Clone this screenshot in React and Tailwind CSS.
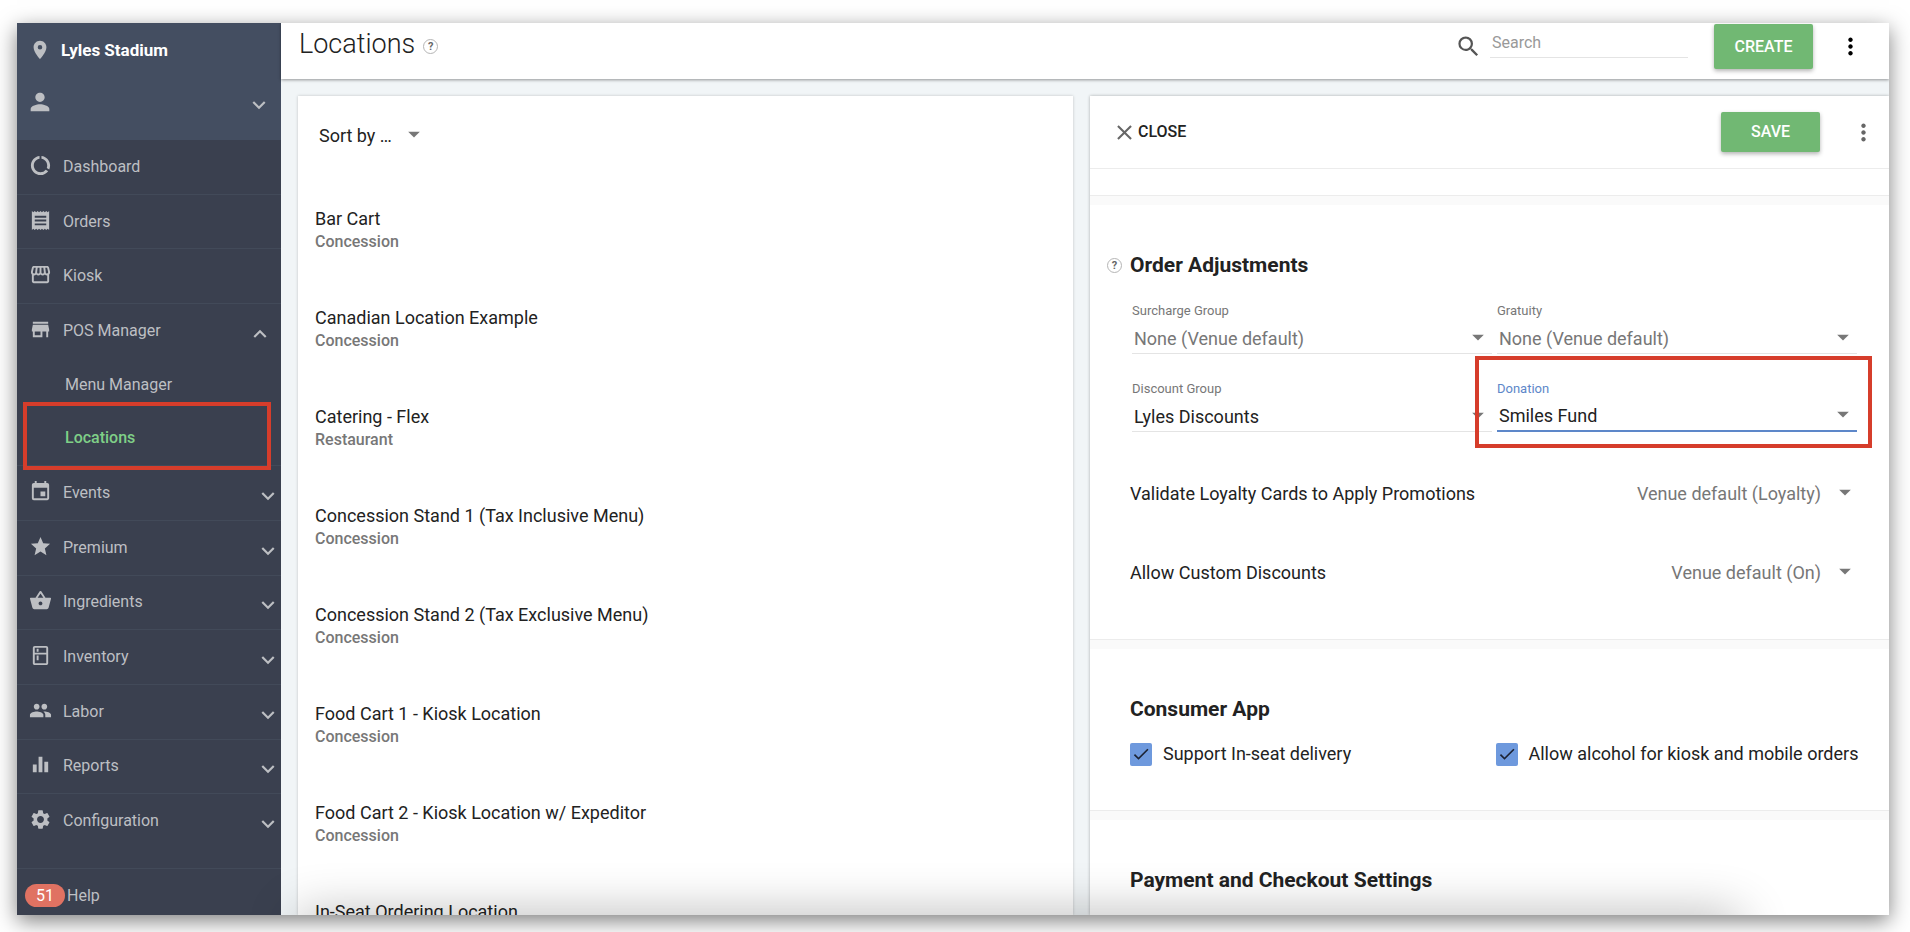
import React from 'react';
import {
  MdPlace,
  MdPerson,
  MdDataUsage,
  MdReceipt,
  MdStorefront,
  MdStore,
  MdEvent,
  MdStar,
  MdShoppingBasket,
  MdOutlineKitchen,
  MdPeople,
  MdEqualizer,
  MdSettings,
  MdExpandMore,
  MdExpandLess,
  MdSearch,
  MdMoreVert,
  MdArrowDropDown,
  MdClose,
  MdCheck
} from 'react-icons/md';

const navItems = [
  { label: 'Dashboard', icon: MdDataUsage },
  { label: 'Orders', icon: MdReceipt },
  { label: 'Kiosk', icon: MdStorefront },
  { label: 'POS Manager', icon: MdStore, open: true, children: ['Menu Manager', 'Locations'] },
  { label: 'Events', icon: MdEvent, collapsed: true },
  { label: 'Premium', icon: MdStar, collapsed: true },
  { label: 'Ingredients', icon: MdShoppingBasket, collapsed: true },
  { label: 'Inventory', icon: MdOutlineKitchen, collapsed: true },
  { label: 'Labor', icon: MdPeople, collapsed: true },
  { label: 'Reports', icon: MdEqualizer, collapsed: true },
  { label: 'Configuration', icon: MdSettings, collapsed: true }
];

const locations = [
  { name: 'Bar Cart', type: 'Concession' },
  { name: 'Canadian Location Example', type: 'Concession' },
  { name: 'Catering - Flex', type: 'Restaurant' },
  { name: 'Concession Stand 1 (Tax Inclusive Menu)', type: 'Concession' },
  { name: 'Concession Stand 2 (Tax Exclusive Menu)', type: 'Concession' },
  { name: 'Food Cart 1 - Kiosk Location', type: 'Concession' },
  { name: 'Food Cart 2 - Kiosk Location w/ Expeditor', type: 'Concession' },
  { name: 'In-Seat Ordering Location', type: 'Concession' }
];

function HelpDot() {
  return (
    <button
      type="button"
      aria-label="Help"
      className="flex h-[15px] w-[15px] shrink-0 items-center justify-center rounded-full border border-[#b5b5b5] text-[11px] leading-none font-bold text-[#666]"
    >
      ?
    </button>
  );
}

function NavRow({ item }) {
  const Icon = item.icon;
  return (
    <a href="#" className="flex flex-1 items-center border-b border-[#424a59] pl-3 last:border-b-0">
      <Icon className="mr-[11px] mb-[3px] h-[23px] w-[23px] shrink-0" />
      <span className="flex-1">{item.label}</span>
      {item.collapsed && <MdExpandMore className="mt-[6px] h-[26px] w-[26px]" />}
    </a>
  );
}

function Sidebar() {
  return (
    <aside className="flex w-[264px] shrink-0 flex-col bg-[#3a404f] text-base text-[#bdbfc3]">
      <div className="h-[117px] shrink-0 bg-[#444e61] pt-[15px]">
        <div className="flex items-center pl-3">
          <MdPlace className="mr-[10px] h-[22px] w-[22px]" />
          <span className="text-[17px] leading-6 font-bold text-white">Lyles Stadium</span>
        </div>
        <button type="button" aria-label="Account" className="mt-6 flex w-full items-center justify-between pr-[9px] pl-[9px]">
          <MdPerson className="h-7 w-7" />
          <MdExpandMore className="mt-[6px] h-[26px] w-[26px]" />
        </button>
      </div>

      <nav className="flex flex-1 flex-col pb-5">
        {navItems.map((item) =>
          item.children ? (
            <div key={item.label} className="flex flex-[3] flex-col border-b border-[#424a59]">
              <a href="#" className="flex flex-1 items-center pr-2 pl-3">
                <item.icon className="mr-[11px] mb-[3px] h-[23px] w-[23px] shrink-0" />
                <span className="flex-1">{item.label}</span>
                <MdExpandLess className="mt-[6px] h-[26px] w-[26px]" />
              </a>
              <a href="#" className="flex flex-1 items-center pl-12">Menu Manager</a>
              <a href="#" className="relative flex flex-1 items-center pl-12 font-medium text-[#7fcf87]">
                Locations
                {/* callout */}
                <span className="pointer-events-none absolute -top-[9px] right-[10px] -bottom-[5px] left-[6px] border-4 border-[#d63d2b]"></span>
              </a>
            </div>
          ) : (
            <NavRow key={item.label} item={item} />
          )
        )}
      </nav>

      <a href="#" className="flex h-[47px] shrink-0 items-center border-t border-[#424a59] pt-[7px] pl-2">
        <span className="mr-[2px] flex h-[23px] w-10 items-center justify-center rounded-full bg-[#e07262] text-white">51</span>
        Help
      </a>
    </aside>
  );
}

function Header() {
  return (
    <header className="z-10 flex h-14 shrink-0 items-center bg-white pr-[25px] pb-[9px] pl-[18px] shadow-[0_1px_3px_rgba(0,0,0,0.4)]">
      <h1 className="mr-2 pb-[5px] text-[27px] leading-9 font-light text-[#222]">Locations</h1>
      <HelpDot />
      <div className="flex-1"></div>
      <label htmlFor="search" aria-label="Search">
        <MdSearch className="mr-2 h-[27px] w-[27px] text-[#555]" />
      </label>
      <input
        id="search"
        type="text"
        placeholder="Search"
        className="mr-[26px] mb-2 h-[30px] w-[198px] border-b border-[#e4e4e4] pl-[2px] text-base text-[#333] outline-none placeholder:text-[#999]"
      />
      <button
        type="button"
        className="mr-6 h-[45px] w-[99px] rounded-[2px] bg-[#71b873] text-base font-medium text-white shadow-[0_2px_4px_rgba(0,0,0,0.3)]"
      >
        CREATE
      </button>
      <button type="button" aria-label="More">
        <MdMoreVert className="h-[27px] w-[27px] text-black" />
      </button>
    </header>
  );
}

function LocationList() {
  return (
    <section className="flex-[775] overflow-hidden bg-white shadow-[0_0_3px_rgba(0,0,0,0.2)]">
      <div className="flex h-[111px] items-start pt-7 pl-[21px]">
        <div className="relative flex items-center">
          <select aria-label="Sort by" className="h-6 w-[107px] appearance-none text-lg leading-6 text-[#222] outline-none">
            <option>Sort by …</option>
          </select>
          <MdArrowDropDown className="pointer-events-none absolute -right-[2px] mb-1 h-7 w-7 text-[#777]" />
        </div>
      </div>
      <ul>
        {locations.map((l) => (
          <li key={l.name} className="h-[99px] pl-[17px]">
            <a href="#" className="block text-lg leading-6 text-[#222]">{l.name}</a>
            <div className="text-base leading-[22px] font-medium text-[#777]">{l.type}</div>
          </li>
        ))}
      </ul>
    </section>
  );
}

function SelectField({ id, label, value, muted, active }) {
  return (
    <div className="relative">
      <label htmlFor={id} className={active ? 'block text-[13px] leading-4 text-[#5d87c9]' : 'block text-[13px] leading-4 text-[#777]'}>
        {label}
      </label>
      <div
        className={
          active
            ? 'relative mt-[5px] flex h-[30px] items-center border-b-2 border-[#5d87c9]'
            : 'relative mt-[5px] flex h-[30px] items-center border-b border-[#e4e4e4]'
        }
      >
        <select
          id={id}
          className={
            muted
              ? 'h-full w-full appearance-none pl-[2px] text-lg leading-6 text-[#777] outline-none'
              : 'h-full w-full appearance-none pl-[2px] text-lg leading-6 text-[#222] outline-none'
          }
        >
          <option>{value}</option>
        </select>
        <MdArrowDropDown className="pointer-events-none absolute right-0 mb-1 h-7 w-7 text-[#777]" />
      </div>
      {active && (
        <span className="pointer-events-none absolute -top-[25px] -right-[15px] -bottom-4 -left-[22px] border-4 border-[#d63d2b]"></span>
      )}
    </div>
  );
}

function SettingRow({ id, label, value }) {
  return (
    <div className="flex h-6 items-center justify-between">
      <label htmlFor={id} className="text-lg leading-6 text-[#222]">{label}</label>
      <div className="relative flex items-center">
        <select id={id} className="h-6 appearance-none pr-9 text-right text-lg leading-6 text-[#777] outline-none">
          <option>{value}</option>
        </select>
        <MdArrowDropDown className="pointer-events-none absolute -right-[2px] mb-1 h-7 w-7 text-[#777]" />
      </div>
    </div>
  );
}

function CheckField({ id, label }) {
  return (
    <div className="flex items-center">
      <div className="relative mr-[11px] flex h-[23px] w-[22px] shrink-0">
        <input id={id} type="checkbox" defaultChecked className="h-full w-full appearance-none rounded-[2px] bg-[#6e99dd]" />
        <MdCheck className="pointer-events-none absolute inset-0 m-auto h-5 w-5 text-[#1c2333]" />
      </div>
      <label htmlFor={id} className="text-lg leading-6 whitespace-nowrap text-[#222]">{label}</label>
    </div>
  );
}

function Divider() {
  return <div className="h-[10px] border-t border-[#ececec] bg-[#fafafa]"></div>;
}

function DetailPanel() {
  return (
    <section className="flex-[799] overflow-hidden bg-white shadow-[0_0_3px_rgba(0,0,0,0.3)]">
      <div className="flex h-[73px] items-center border-b border-[#ececec] pr-3 pl-[22px]">
        <button type="button" className="flex items-center gap-px text-base font-medium text-[#222]">
          <MdClose className="h-[25px] w-[25px] text-[#666]" />
          CLOSE
        </button>
        <button
          type="button"
          className="mr-[30px] ml-auto h-10 w-[99px] rounded-[2px] bg-[#71b873] text-base font-medium text-white shadow-[0_2px_4px_rgba(0,0,0,0.3)]"
        >
          SAVE
        </button>
        <button type="button" aria-label="More">
          <MdMoreVert className="h-[27px] w-[27px] text-[#666]" />
        </button>
      </div>
      <div className="h-[26px]"></div>

      <Divider />
      <div className="pt-[46px] pr-8 pb-[54px] pl-10">
        <div className="-ml-[23px] flex h-7 items-center gap-2">
          <HelpDot />
          <h2 className="text-[21px] leading-7 font-bold text-[#222]">Order Adjustments</h2>
        </div>
        <div className="mt-6 grid grid-cols-2 gap-x-[5px] gap-y-[27px] pl-[2px]">
          <SelectField id="surcharge" label="Surcharge Group" value="None (Venue default)" muted />
          <SelectField id="gratuity" label="Gratuity" value="None (Venue default)" muted />
          <SelectField id="discount" label="Discount Group" value="Lyles Discounts" />
          <SelectField id="donation" label="Donation" value="Smiles Fund" active />
        </div>
        <div className="mt-[50px] flex flex-col gap-[55px]">
          <SettingRow id="loyalty" label="Validate Loyalty Cards to Apply Promotions" value="Venue default (Loyalty)" />
          <SettingRow id="custom" label="Allow Custom Discounts" value="Venue default (On)" />
        </div>
      </div>

      <Divider />
      <div className="pt-[46px] pr-8 pb-[45px] pl-10">
        <h2 className="text-[21px] leading-7 font-bold text-[#222]">Consumer App</h2>
        <div className="mt-[19px] grid h-[23px] grid-cols-2 items-center gap-x-1">
          <CheckField id="inseat" label="Support In-seat delivery" />
          <CheckField id="alcohol" label="Allow alcohol for kiosk and mobile orders" />
        </div>
      </div>

      <Divider />
      <div className="pt-[46px] pl-10">
        <h2 className="text-[21px] leading-7 font-bold text-[#222]">Payment and Checkout Settings</h2>
      </div>
    </section>
  );
}

export default function App() {
  return (
    <div className="h-screen overflow-hidden bg-white pt-[23px] pr-[21px] pb-[17px] pl-[17px] font-[Roboto,sans-serif]">
      <div className="relative h-full shadow-[0_6px_20px_rgba(0,0,0,0.5)]">
        <div className="relative flex h-full overflow-hidden">
          <Sidebar />
          <main className="flex min-w-0 flex-1 flex-col bg-[#f1f5f7]">
            <Header />
            <div className="flex min-h-0 flex-1 gap-[17px] pt-[17px] pl-[17px]">
              <LocationList />
              <DetailPanel />
            </div>
          </main>
          {/* soft shade along the bottom edge */}
          <div className="pointer-events-none absolute right-[150px] -bottom-10 left-[280px] h-10 shadow-[0_0_50px_rgba(0,0,0,0.3)]"></div>
        </div>
      </div>
    </div>
  );
}
